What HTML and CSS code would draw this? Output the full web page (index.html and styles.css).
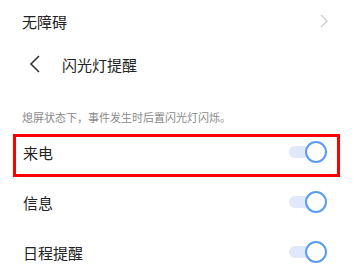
FILE: index.html
```html
<!DOCTYPE html>
<html lang="zh-CN">
<head>
    <meta charset="UTF-8">
    <meta name="viewport" content="width=device-width, initial-scale=1.0">
    <title>闪光灯提醒</title>
    <link rel="stylesheet" href="styles.css">
</head>
<body>
    <!-- 上一级入口 -->
    <div class="entry">
        <span>无障碍</span>
        <svg class="chevron" width="8" height="14" viewBox="0 0 8 14">
            <path d="M1 1 L7 7 L1 13" fill="none" stroke="#cfcfcf" stroke-width="1.4"/>
        </svg>
    </div>

    <!-- 标题栏 -->
    <div class="nav">
        <svg class="back" width="13" height="18" viewBox="0 0 13 18">
            <path d="M11 1 L3 9 L11 17" fill="none" stroke="#333" stroke-width="1.6"/>
        </svg>
        <span class="title">闪光灯提醒</span>
    </div>

    <div class="desc">熄屏状态下，事件发生时后置闪光灯闪烁。</div>

    <div class="list">
        <div class="row marked">
            <span>来电</span>
            <div class="switch on"><div class="knob"></div></div>
        </div>
        <div class="row">
            <span>信息</span>
            <div class="switch on"><div class="knob"></div></div>
        </div>
        <div class="row">
            <span>日程提醒</span>
            <div class="switch on"><div class="knob"></div></div>
        </div>
    </div>
</body>
</html>
```

FILE: styles.css
```css
body {
    margin: 0;
    background: #fff;
    color: #222;
    font-family: "Noto Sans CJK SC", "Noto Sans", sans-serif;
    overflow: hidden;
}
.entry {
    display: flex;
    align-items: center;
    justify-content: space-between;
    height: 42px;
    padding: 0 32px 0 22px;
    font-size: 15px;
}
.nav {
    display: flex;
    align-items: center;
    height: 44px;
    padding-left: 28px;
}
.back {
    margin-right: 21px;
}
.title {
    font-size: 15px;
}
.desc {
    margin-top: 23px;
    padding-left: 22px;
    font-size: 11px;
    line-height: 16px;
    color: #8a8a8a;
}
.list {
    margin-top: 2px;
}
.row {
    position: relative;
    display: flex;
    align-items: center;
    justify-content: space-between;
    height: 50px;
    padding: 0 33px 0 23px;
    font-size: 15px;
}
/* 红色标注框 */
.row.marked::after {
    content: "";
    position: absolute;
    left: 13px;
    right: 20px;
    top: 7px;
    bottom: 0;
    border: 3px solid #f00;
}
.switch {
    position: relative;
    width: 38px;
    height: 22px;
}
.switch::before {
    content: "";
    position: absolute;
    left: 0;
    right: 4px;
    top: 5px;
    height: 12px;
    border-radius: 6px;
    background: #dfe9fb;
}
.knob {
    position: absolute;
    right: 0;
    top: 0;
    width: 18px;
    height: 18px;
    border: 2px solid #5b9cf2;
    border-radius: 50%;
    background: #fff;
}
```
